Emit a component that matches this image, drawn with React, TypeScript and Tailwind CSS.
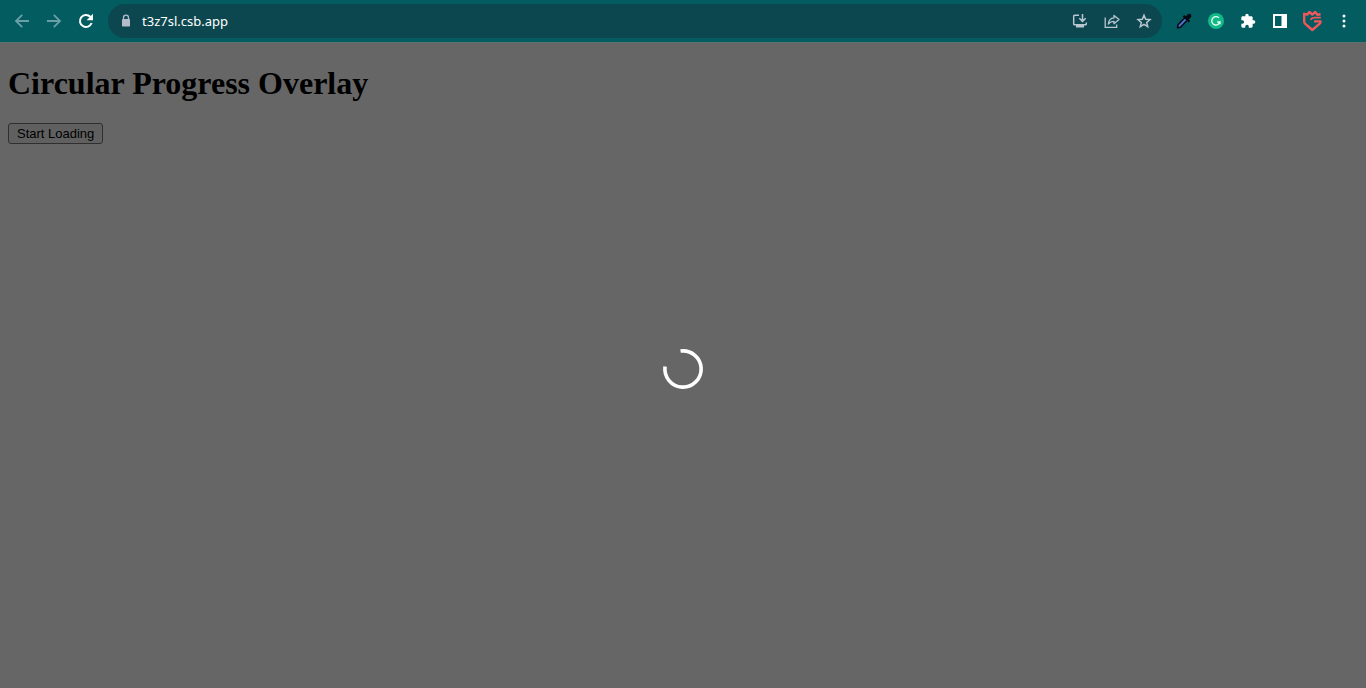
import { useState, type ReactNode } from "react";

function BarButton({ label, children }: { label: string; children: ReactNode }) {
  return (
    <button type="button" aria-label={label} className="flex size-8 shrink-0 items-center justify-center">
      {children}
    </button>
  );
}

function BrowserBar() {
  return (
    <header className="flex h-[43px] shrink-0 items-center gap-1.5 border-b border-[#5a7071] bg-[#025c60] px-1.5">
      <nav aria-label="History" className="flex text-[#6b9fa6]">
        <BarButton label="Back">
          <svg viewBox="0 0 16 16" className="size-4" fill="none" stroke="currentColor" strokeWidth="1.8">
            <path d="M15 8H2.2M8.2 1.8 2 8l6.2 6.2" />
          </svg>
        </BarButton>
        <BarButton label="Forward">
          <svg viewBox="0 0 16 16" className="size-4" fill="none" stroke="currentColor" strokeWidth="1.8">
            <path d="M1 8h12.8M7.8 1.8 14 8l-6.2 6.2" />
          </svg>
        </BarButton>
        <BarButton label="Reload">
          <svg viewBox="0 0 16 16" className="size-4 text-white">
            <path d="M13.6 10A6 6 0 1 1 12.3 3.8L13.3 4.8" fill="none" stroke="currentColor" strokeWidth="2" />
            <path d="M15 .8v6.4H8.6z" fill="currentColor" />
          </svg>
        </BarButton>
      </nav>

      <div className="flex h-[34px] min-w-0 flex-1 items-center rounded-full bg-[#0c474f] pr-0.5 pl-3">
        <svg viewBox="0 0 12 14" className="h-3.5 w-3 shrink-0 text-[#b4bccb]" aria-hidden="true">
          <path d="M3.5 6V3.7a2.5 2.5 0 0 1 5 0V6" fill="none" stroke="currentColor" strokeWidth="1.3" />
          <rect x="2" y="5" width="8" height="7.5" rx="0.8" fill="currentColor" />
        </svg>
        <input
          aria-label="Address"
          defaultValue="t3z7sl.csb.app"
          className="ml-2.5 min-w-0 flex-1 bg-transparent font-['Noto_Sans',sans-serif] text-[13px] leading-5 text-white outline-none"
        />
        <div className="flex text-[#b9c6d2]">
          <BarButton label="Install app">
            <svg viewBox="0 0 16 16" className="size-4" fill="none" stroke="currentColor" strokeWidth="1.5">
              <path d="M7 2.2H2.5a.8.8 0 0 0-.8.8v8a.8.8 0 0 0 .8.8h11a.8.8 0 0 0 .8-.8V9.5M10.5 1v7M7.3 5.2l3.2 3.2 3.2-3.2" />
              <path d="M4 11.5h8V14.5H4z" fill="currentColor" stroke="none" />
            </svg>
          </BarButton>
          <BarButton label="Share">
            <svg viewBox="0 0 16 16" className="size-4" fill="none" stroke="currentColor" strokeWidth="1.3">
              <path d="M1.2 4.5v9.8h11.5V11.5" />
              <path d="M10 2.5 15 6.6 10 10.7V8.3C7.5 8.3 5.7 9.1 4.3 11 4.6 7.7 6.5 5.2 10 4.9z" strokeLinejoin="round" />
            </svg>
          </BarButton>
          <BarButton label="Bookmark">
            <svg viewBox="0 0 16 16" className="size-4" fill="none" stroke="currentColor" strokeWidth="1.5">
              <path d="m8 2.2 1.7 4 4.3.4-3.3 2.8 1 4.2L8 11.4l-3.7 2.2 1-4.2L2 6.6l4.3-.4z" />
            </svg>
          </BarButton>
        </div>
      </div>

      <div className="flex text-white">
        <BarButton label="Color picker">
          <svg viewBox="0 0 16 16" className="size-4">
            <path d="m9 4.5 2.5 2.5-7 7.2-3 .6.5-3z" fill="#4a6fd0" stroke="#050a12" strokeWidth="1.5" strokeLinejoin="round" />
            <path d="m6.8 3.6 1.5-1.5 1.7 1.4 1.5-1.9c2.3-2.1 5.3.6 3.2 3l-2 1.7 1.4 1.7-1.5 1.5z" fill="#050a12" />
          </svg>
        </BarButton>
        <BarButton label="Grammarly">
          <svg viewBox="0 0 16 16" className="size-4" fill="none">
            <circle cx="8" cy="8" r="8" fill="#12b886" />
            <path d="M11 4.9A4.2 4.2 0 1 0 12 9H9.2M12 9v2.2" stroke="#e9fff7" strokeWidth="1.3" />
          </svg>
        </BarButton>
        <BarButton label="Extensions">
          <svg viewBox="0 0 24 24" className="size-4" fill="currentColor">
            <path d="M20.5 11H19V7c0-1.1-.9-2-2-2h-4V3.5a2.5 2.5 0 0 0-5 0V5H4c-1.1 0-2 .9-2 2v3.8h1.5a2.7 2.7 0 0 1 0 5.4H2V20c0 1.1.9 2 2 2h3.8v-1.5a2.7 2.7 0 0 1 5.4 0V22H17c1.1 0 2-.9 2-2v-4h1.5a2.5 2.5 0 0 0 0-5z" />
          </svg>
        </BarButton>
        <BarButton label="Side panel">
          <svg viewBox="0 0 14 14" className="size-3.5" fill="currentColor">
            <path fillRule="evenodd" d="M0 0h14v14H0zM2 2v10h6.5V2z" />
          </svg>
        </BarButton>
        <BarButton label="Profile">
          <svg viewBox="0 0 20 22" className="h-[22px] w-5" fill="none" stroke="#f0575c" strokeWidth="2.4" strokeLinejoin="round">
            <path d="M18.6 4.2 15.4 4.8 13.2 2 10.3 4.6 7.4 2 5.2 4.6 2.2 3.8v7.6c0 1 .4 1.7 1.100 2.400L10.300 20l7.400-6.400c.6-.6.9-1.200.9-2.200H12" />
            <path d="M18.800 7.600H12.500Q9.600 7.600 8.400 9.800" strokeWidth="1.800" />
          </svg>
        </BarButton>
        <BarButton label="Menu">
          <svg viewBox="0 0 16 16" className="size-4" fill="currentColor">
            <circle cx="8" cy="3" r="1.5" />
            <circle cx="8" cy="8" r="1.5" />
            <circle cx="8" cy="13" r="1.5" />
          </svg>
        </BarButton>
      </div>
    </header>
  );
}

function LoadingOverlay() {
  return (
    <div className="absolute inset-0 flex items-center justify-center bg-black/60 pt-[7px]">
      <svg role="progressbar" aria-label="Loading" viewBox="22 22 44 44" className="size-[42px]" fill="none">
        <path d="M41.4 25.2A19 19 0 1 1 25.2 41.4" stroke="#ffffff" strokeWidth="3.8" />
      </svg>
    </div>
  );
}

export default function App() {
  const [loading, setLoading] = useState(true);

  return (
    <div className="flex min-h-screen flex-col bg-white">
      <BrowserBar />
      <main className="relative flex-1 px-2 pt-[22px]">
        <h1 className="font-['Liberation_Serif',serif] text-[32px] leading-9 font-bold text-black">
          Circular Progress Overlay
        </h1>
        <button
          type="button"
          onClick={() => setLoading(true)}
          className="mt-[22px] block h-[21px] rounded-[3px] border border-[#767676] bg-[#efefef] px-2 font-['Liberation_Sans',sans-serif] text-[13px] leading-[19px] text-black"
        >
          Start Loading
        </button>
        {loading && <LoadingOverlay />}
      </main>
    </div>
  );
}
